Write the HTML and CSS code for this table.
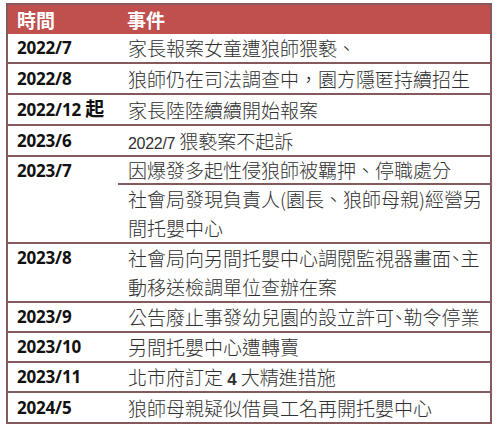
FILE: index.html
```html
<!DOCTYPE html>
<html lang="zh-Hant">
<head>
<meta charset="utf-8">
<link rel="stylesheet" href="styles.css">
</head>
<body>
<table class="timeline">
  <thead>
    <tr><th class="date">時間</th><th class="event">事件</th></tr>
  </thead>
  <tbody>
    <tr><td class="date">2022/7</td><td class="event">家長報案女童遭狼師猥褻、</td></tr>
    <tr class="tall"><td class="date">2022/8</td><td class="event">狼師仍在司法調查中，園方隱匿持續招生</td></tr>
    <tr class="tall"><td class="date">2022/12 <span class="cjk">起</span></td><td class="event">家長陸陸續續開始報案</td></tr>
    <tr class="tall"><td class="date">2023/6</td><td class="event"><span class="num">2022/7</span> 猥褻案不起訴</td></tr>
    <tr class="sub"><td class="date" rowspan="2">2023/7</td><td class="event first">因爆發多起性侵狼師被羈押、停職處分</td></tr>
    <tr class="two"><td class="event">社會局發現負責人(園長、狼師母親)經營另<br>間托嬰中心</td></tr>
    <tr class="two"><td class="date">2023/8</td><td class="event">社會局向另間托嬰中心調閱監視器畫面<span class="half">、</span>主<br>動移送檢調單位查辦在案</td></tr>
    <tr><td class="date">2023/9</td><td class="event">公告廢止事發幼兒園的設立許可<span class="half">、</span>勒令停業</td></tr>
    <tr><td class="date">2023/10</td><td class="event">另間托嬰中心遭轉賣</td></tr>
    <tr><td class="date">2023/11</td><td class="event">北市府訂定 <b class="num">4</b> 大精進措施</td></tr>
    <tr class="tall"><td class="date">2024/5</td><td class="event">狼師母親疑似借員工名再開托嬰中心</td></tr>
  </tbody>
</table>
</body>
</html>
```
FILE: styles.css
```css
html, body {
  margin: 0;
  padding: 0;
  background: #ffffff;
}
body {
  padding: 3px 0 0 6px;
}
.timeline {
  border-collapse: collapse;
  width: 486px;
  border: 2px solid #86595d;
  font-family: "Noto Sans CJK TC", sans-serif;
}
.timeline th {
  background: #c0504d;
  color: #ffffff;
  font-size: 19px;
  font-weight: 700;
  text-align: left;
  height: 29px;
  padding: 0 0 0 9px;
  line-height: 28px;
  vertical-align: middle;
}
.timeline td {
  border-bottom: 2px solid #86595d;
  vertical-align: top;
  padding: 0 0 0 9px;
  line-height: 28px;
  white-space: nowrap;
}
.timeline .date {
  width: 101px;
}
.timeline td.date {
  font-family: "Open Sans", "Liberation Sans", sans-serif;
  font-weight: 700;
  font-size: 17px;
  color: #111111;
  letter-spacing: -0.2px;
}
.timeline td.date .cjk {
  font-family: "Noto Sans CJK TC", sans-serif;
  font-size: 19px;
  line-height: 1;
}
.timeline td.event {
  font-size: 19px;
  font-weight: 300;
  color: #303030;
  padding-left: 10px;
}
.timeline tr.tall td {
  padding-top: 1px;
}
.timeline tr.two td.event {
  line-height: 28.5px;
}
.timeline td.event.first {
  line-height: 26px;
  padding-top: 0;
}
.num {
  font-family: "Liberation Sans", sans-serif;
  font-size: 16px;
  letter-spacing: -0.3px;
  line-height: 1;
}
b.num {
  font-weight: 700;
  font-size: 17px;
  letter-spacing: 0;
}
.half {
  font-feature-settings: "halt";
  line-height: 1;
}
```
